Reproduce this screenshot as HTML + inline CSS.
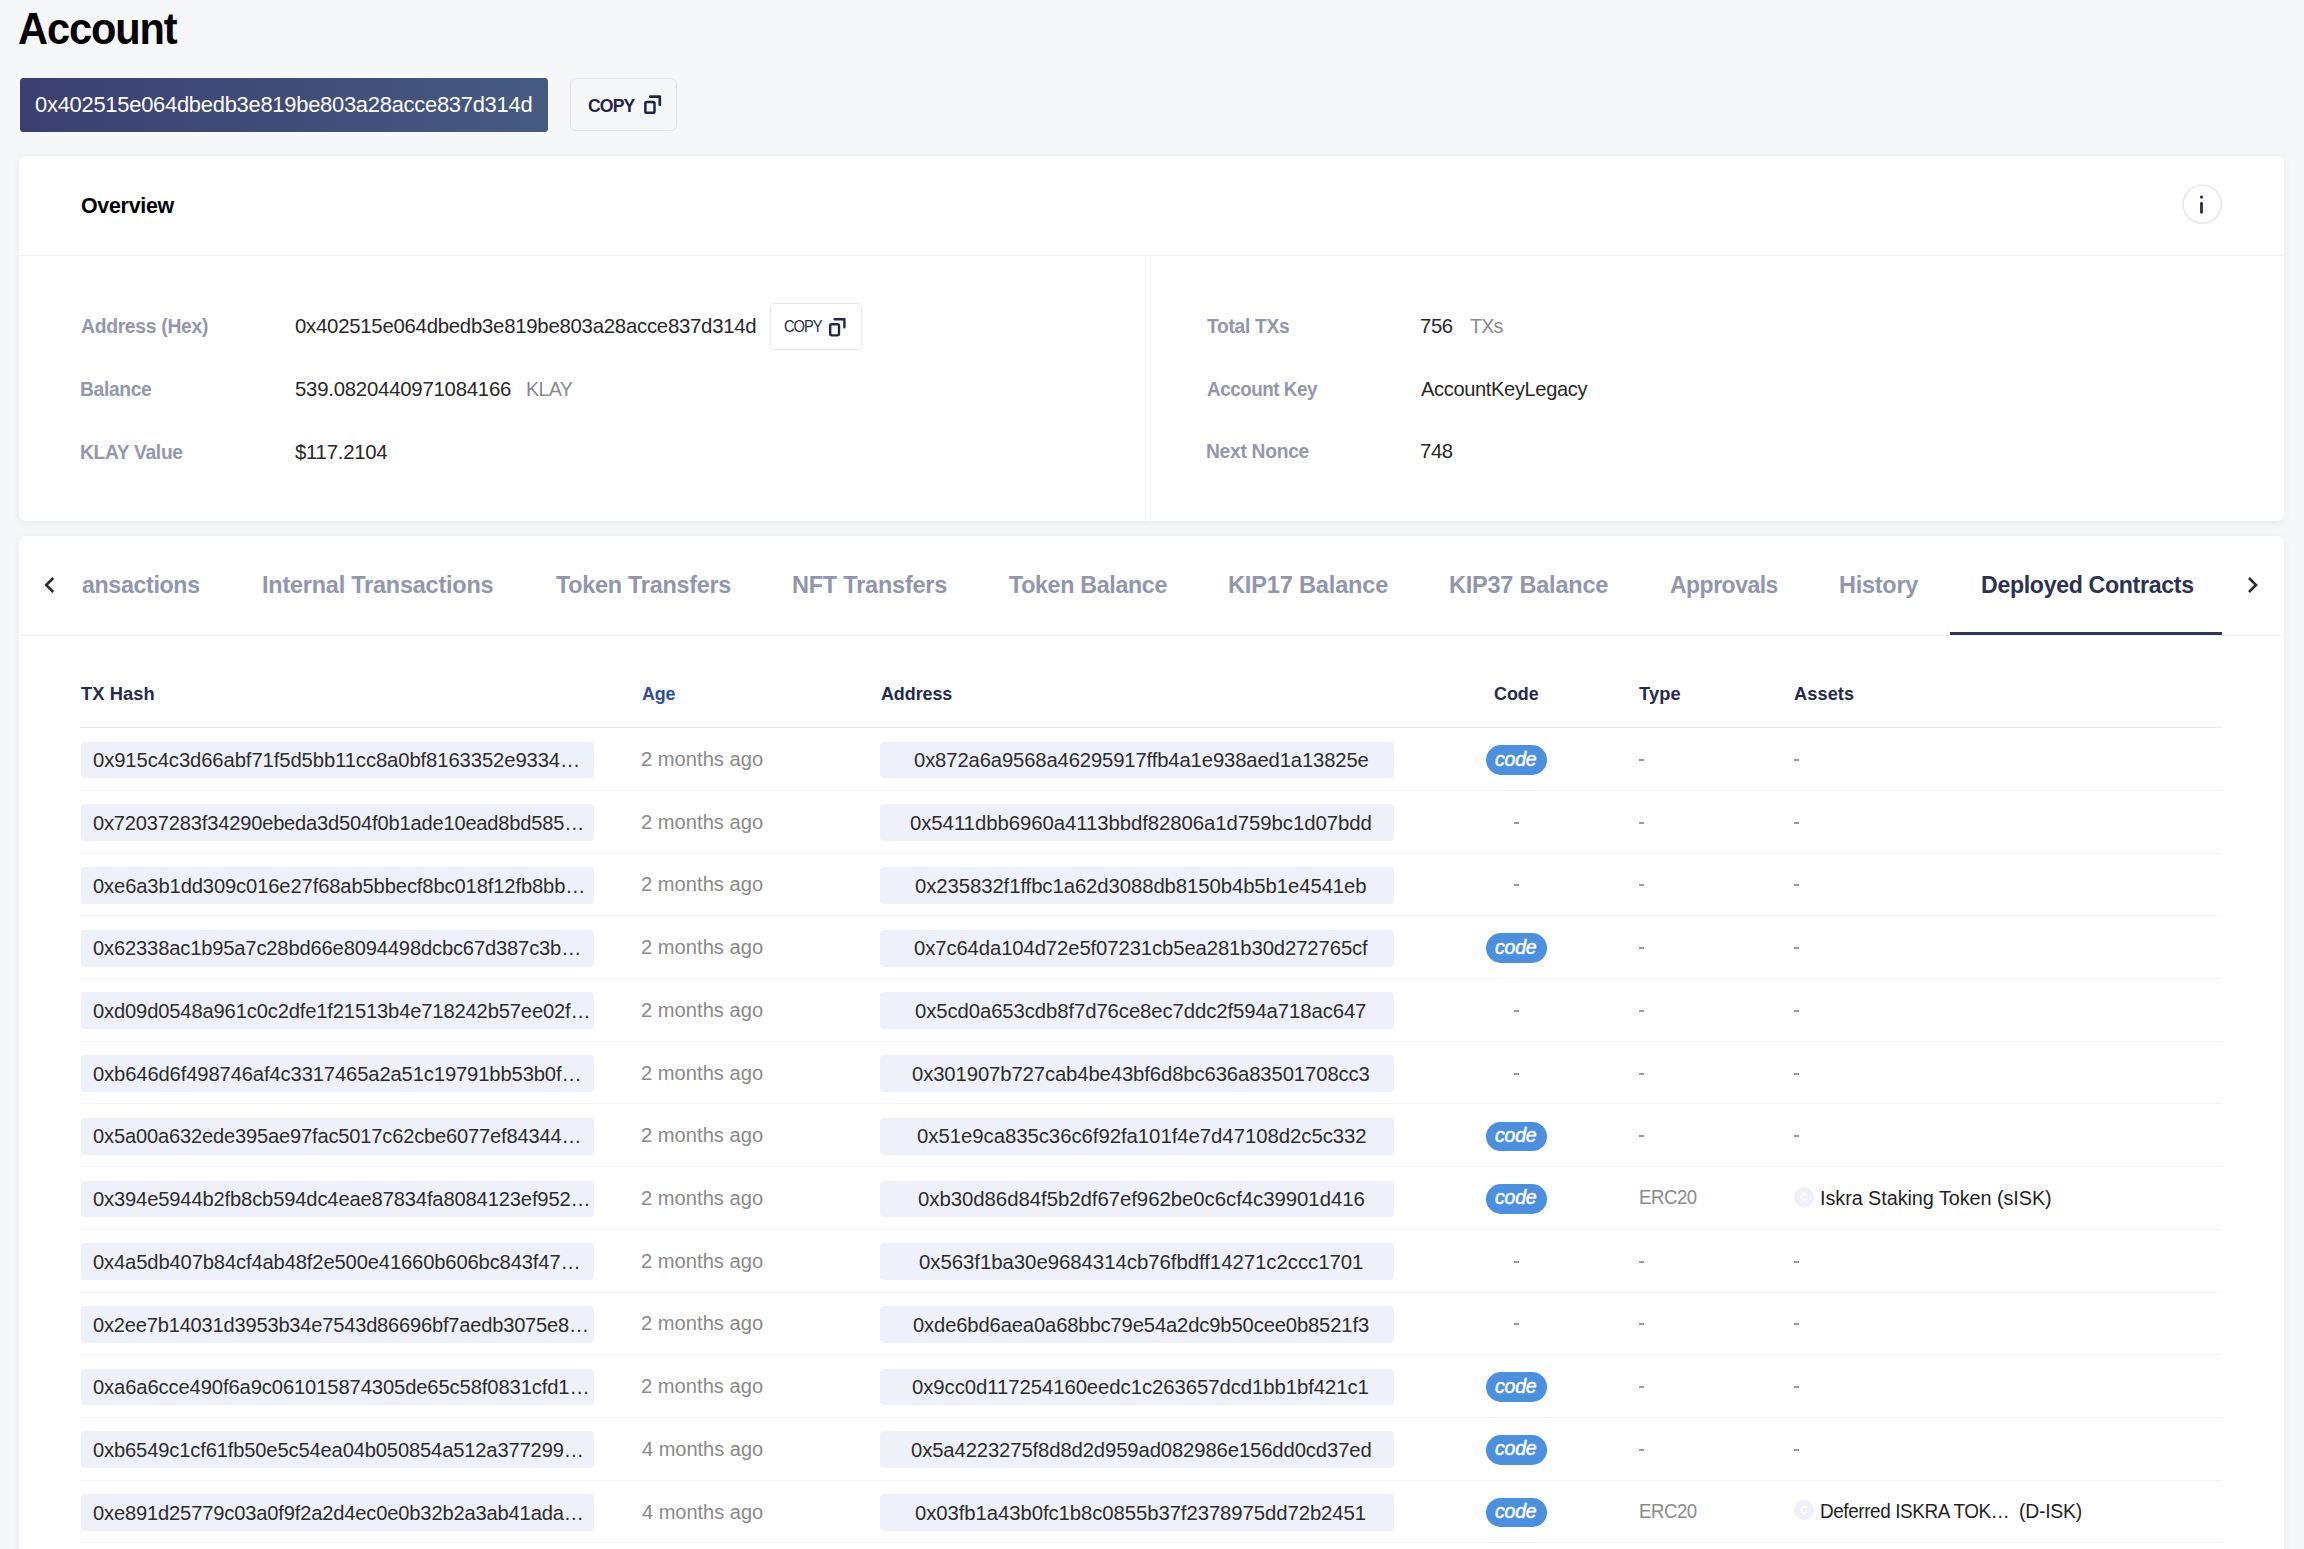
<!DOCTYPE html>
<html><head><meta charset="utf-8"><title>Account</title>
<style>
html,body{margin:0;padding:0}
body{width:2304px;height:1549px;overflow:hidden;background:#f6f7f9;position:relative;font-family:"Liberation Sans", sans-serif}
.t{position:absolute;white-space:pre;line-height:normal}
.clipbox{position:absolute;overflow:hidden}
.dash{position:absolute;width:5px;height:2px;background:#9a9a9a}
</style></head><body>
<div style='position:absolute;left:19.5px;top:78px;width:528.5px;height:53.5px;border-radius:3.5px;background:linear-gradient(90deg,#3b3f70 0%,#465a81 100%)'></div><div style='position:absolute;left:570px;top:78px;width:107px;height:53px;box-sizing:border-box;border:1px solid #e2e4ec;border-radius:6px'></div><svg style='position:absolute;left:636px;top:88px' width='34' height='34' viewBox='0 0 34 34'><path d='M14.3 8.67 H23.8 V16.65' fill='none' stroke='#1f2447' stroke-width='2.7' stroke-linecap='round' stroke-linejoin='round'/><rect x='9.35' y='13.98' width='9.15' height='10.77' fill='none' stroke='#1f2447' stroke-width='2.5' rx='1.6'/></svg><div style='position:absolute;left:19.3px;top:155.8px;width:2264.7px;height:365px;background:#fff;border-radius:7px;box-shadow:0 2px 9px rgba(40,50,90,0.065)'></div><div style='position:absolute;left:19px;top:255px;width:2264px;height:1px;background:#efeff1'></div><div style='position:absolute;left:1150px;top:256px;width:1px;height:265px;background:#efeff1'></div><svg style='position:absolute;left:2176px;top:178px' width='52' height='52' viewBox='0 0 52 52'><circle cx='26.25' cy='26.2' r='19.1' fill='none' stroke='#e6e6ec' stroke-width='1.4'/><circle cx='25.5' cy='19.1' r='1.55' fill='#262a4e'/><path d='M25.5 25.4 V34.3' stroke='#262a4e' stroke-width='2.8' stroke-linecap='round'/></svg><div style='position:absolute;left:770.3px;top:303.4px;width:92px;height:46.4px;box-sizing:border-box;border:1.2px solid #e6e7ee;border-radius:5px'></div><svg style='position:absolute;left:822px;top:310px' width='34' height='34' viewBox='0 0 34 34'><path d='M12.6 9.2 H22.4 V17.2' fill='none' stroke='#22264a' stroke-width='2.4' stroke-linecap='round' stroke-linejoin='round'/><rect x='8.2' y='14.25' width='8.8' height='11.1' fill='none' stroke='#22264a' stroke-width='2.4' rx='1.6'/></svg><div style='position:absolute;left:19.3px;top:536px;width:2264.7px;height:1100px;background:#fff;border-radius:7px;box-shadow:0 2px 9px rgba(40,50,90,0.065)'></div><div style='position:absolute;left:19px;top:635px;width:2264px;height:1px;background:#f0f0f2'></div><div style='position:absolute;left:1950px;top:632px;width:272px;height:3px;background:#2f3358'></div><svg style='position:absolute;left:38px;top:572px' width='22' height='26' viewBox='0 0 22 26'><path d='M15.2 6 L8.2 13 L15.2 20' fill='none' stroke='#2a2a2a' stroke-width='2.6'/></svg><svg style='position:absolute;left:2242px;top:572px' width='22' height='26' viewBox='0 0 22 26'><path d='M7 6 L14 13 L7 20' fill='none' stroke='#2a2a2a' stroke-width='2.6'/></svg><div style='position:absolute;left:80px;top:727px;width:2142px;height:1px;background:#e6e6eb'></div><div style='position:absolute;left:80.6px;top:741.60px;width:513.4px;height:36.8px;background:#eff1fa;border-radius:4px'></div><div style='position:absolute;left:880px;top:741.60px;width:514.3px;height:36.8px;background:#eff1fa;border-radius:4px'></div><div style='position:absolute;left:80px;top:790px;width:2142px;height:1px;background:#f4f4f6'></div><div style='position:absolute;left:1486px;top:745.30px;width:61.4px;height:29.4px;background:#4a8fe0;border-radius:15px'></div><div class=dash style='left:1639px;top:759px'></div><div class=dash style='left:1794px;top:759px'></div><div style='position:absolute;left:80.6px;top:804.31px;width:513.4px;height:36.8px;background:#eff1fa;border-radius:4px'></div><div style='position:absolute;left:880px;top:804.31px;width:514.3px;height:36.8px;background:#eff1fa;border-radius:4px'></div><div style='position:absolute;left:80px;top:853px;width:2142px;height:1px;background:#f4f4f6'></div><div class=dash style='left:1514px;top:822px'></div><div class=dash style='left:1639px;top:822px'></div><div class=dash style='left:1794px;top:822px'></div><div style='position:absolute;left:80.6px;top:867.02px;width:513.4px;height:36.8px;background:#eff1fa;border-radius:4px'></div><div style='position:absolute;left:880px;top:867.02px;width:514.3px;height:36.8px;background:#eff1fa;border-radius:4px'></div><div style='position:absolute;left:80px;top:915px;width:2142px;height:1px;background:#f4f4f6'></div><div class=dash style='left:1514px;top:884px'></div><div class=dash style='left:1639px;top:884px'></div><div class=dash style='left:1794px;top:884px'></div><div style='position:absolute;left:80.6px;top:929.73px;width:513.4px;height:36.8px;background:#eff1fa;border-radius:4px'></div><div style='position:absolute;left:880px;top:929.73px;width:514.3px;height:36.8px;background:#eff1fa;border-radius:4px'></div><div style='position:absolute;left:80px;top:978px;width:2142px;height:1px;background:#f4f4f6'></div><div style='position:absolute;left:1486px;top:933.43px;width:61.4px;height:29.4px;background:#4a8fe0;border-radius:15px'></div><div class=dash style='left:1639px;top:947px'></div><div class=dash style='left:1794px;top:947px'></div><div style='position:absolute;left:80.6px;top:992.44px;width:513.4px;height:36.8px;background:#eff1fa;border-radius:4px'></div><div style='position:absolute;left:880px;top:992.44px;width:514.3px;height:36.8px;background:#eff1fa;border-radius:4px'></div><div style='position:absolute;left:80px;top:1041px;width:2142px;height:1px;background:#f4f4f6'></div><div class=dash style='left:1514px;top:1010px'></div><div class=dash style='left:1639px;top:1010px'></div><div class=dash style='left:1794px;top:1010px'></div><div style='position:absolute;left:80.6px;top:1055.15px;width:513.4px;height:36.8px;background:#eff1fa;border-radius:4px'></div><div style='position:absolute;left:880px;top:1055.15px;width:514.3px;height:36.8px;background:#eff1fa;border-radius:4px'></div><div style='position:absolute;left:80px;top:1103px;width:2142px;height:1px;background:#f4f4f6'></div><div class=dash style='left:1514px;top:1073px'></div><div class=dash style='left:1639px;top:1073px'></div><div class=dash style='left:1794px;top:1073px'></div><div style='position:absolute;left:80.6px;top:1117.86px;width:513.4px;height:36.8px;background:#eff1fa;border-radius:4px'></div><div style='position:absolute;left:880px;top:1117.86px;width:514.3px;height:36.8px;background:#eff1fa;border-radius:4px'></div><div style='position:absolute;left:80px;top:1166px;width:2142px;height:1px;background:#f4f4f6'></div><div style='position:absolute;left:1486px;top:1121.56px;width:61.4px;height:29.4px;background:#4a8fe0;border-radius:15px'></div><div class=dash style='left:1639px;top:1135px'></div><div class=dash style='left:1794px;top:1135px'></div><div style='position:absolute;left:80.6px;top:1180.57px;width:513.4px;height:36.8px;background:#eff1fa;border-radius:4px'></div><div style='position:absolute;left:880px;top:1180.57px;width:514.3px;height:36.8px;background:#eff1fa;border-radius:4px'></div><div style='position:absolute;left:80px;top:1229px;width:2142px;height:1px;background:#f4f4f6'></div><div style='position:absolute;left:1486px;top:1184.27px;width:61.4px;height:29.4px;background:#4a8fe0;border-radius:15px'></div><svg style='position:absolute;left:1794px;top:1186.87px' width='20' height='20' viewBox='0 0 20 20'><circle cx='10' cy='10' r='10' fill='#eef0fb'/><path d='M12.8 8.1 A3.2 3.2 0 1 0 12.8 11.9' fill='none' stroke='#fff' stroke-width='1.6'/><path d='M10.1 5.2 V7.2 M10.1 12.8 V14.8' stroke='#fff' stroke-width='1.6'/></svg><div style='position:absolute;left:80.6px;top:1243.28px;width:513.4px;height:36.8px;background:#eff1fa;border-radius:4px'></div><div style='position:absolute;left:880px;top:1243.28px;width:514.3px;height:36.8px;background:#eff1fa;border-radius:4px'></div><div style='position:absolute;left:80px;top:1292px;width:2142px;height:1px;background:#f4f4f6'></div><div class=dash style='left:1514px;top:1261px'></div><div class=dash style='left:1639px;top:1261px'></div><div class=dash style='left:1794px;top:1261px'></div><div style='position:absolute;left:80.6px;top:1305.99px;width:513.4px;height:36.8px;background:#eff1fa;border-radius:4px'></div><div style='position:absolute;left:880px;top:1305.99px;width:514.3px;height:36.8px;background:#eff1fa;border-radius:4px'></div><div style='position:absolute;left:80px;top:1354px;width:2142px;height:1px;background:#f4f4f6'></div><div class=dash style='left:1514px;top:1323px'></div><div class=dash style='left:1639px;top:1323px'></div><div class=dash style='left:1794px;top:1323px'></div><div style='position:absolute;left:80.6px;top:1368.70px;width:513.4px;height:36.8px;background:#eff1fa;border-radius:4px'></div><div style='position:absolute;left:880px;top:1368.70px;width:514.3px;height:36.8px;background:#eff1fa;border-radius:4px'></div><div style='position:absolute;left:80px;top:1417px;width:2142px;height:1px;background:#f4f4f6'></div><div style='position:absolute;left:1486px;top:1372.40px;width:61.4px;height:29.4px;background:#4a8fe0;border-radius:15px'></div><div class=dash style='left:1639px;top:1386px'></div><div class=dash style='left:1794px;top:1386px'></div><div style='position:absolute;left:80.6px;top:1431.41px;width:513.4px;height:36.8px;background:#eff1fa;border-radius:4px'></div><div style='position:absolute;left:880px;top:1431.41px;width:514.3px;height:36.8px;background:#eff1fa;border-radius:4px'></div><div style='position:absolute;left:80px;top:1480px;width:2142px;height:1px;background:#f4f4f6'></div><div style='position:absolute;left:1486px;top:1435.11px;width:61.4px;height:29.4px;background:#4a8fe0;border-radius:15px'></div><div class=dash style='left:1639px;top:1449px'></div><div class=dash style='left:1794px;top:1449px'></div><div style='position:absolute;left:80.6px;top:1494.12px;width:513.4px;height:36.8px;background:#eff1fa;border-radius:4px'></div><div style='position:absolute;left:880px;top:1494.12px;width:514.3px;height:36.8px;background:#eff1fa;border-radius:4px'></div><div style='position:absolute;left:80px;top:1542px;width:2142px;height:1px;background:#f4f4f6'></div><div style='position:absolute;left:1486px;top:1497.82px;width:61.4px;height:29.4px;background:#4a8fe0;border-radius:15px'></div><svg style='position:absolute;left:1794px;top:1500.42px' width='20' height='20' viewBox='0 0 20 20'><circle cx='10' cy='10' r='10' fill='#eef0fb'/><path d='M12.8 8.1 A3.2 3.2 0 1 0 12.8 11.9' fill='none' stroke='#fff' stroke-width='1.6'/><path d='M10.1 5.2 V7.2 M10.1 12.8 V14.8' stroke='#fff' stroke-width='1.6'/></svg>
<span class=t style='left:18.06px;top:4.30px;font-size:44px;color:#000;letter-spacing:-1.154px;transform:scaleX(0.9441);transform-origin:0 0;font-weight:700'>Account</span><span class=t style='left:35.00px;top:91.50px;font-size:22.6px;color:#fff;letter-spacing:-0.265px;transform:scaleX(0.9698);transform-origin:0 0'>0x402515e064dbedb3e819be803a28acce837d314d</span><span class=t style='left:588.40px;top:95.30px;font-size:19px;color:#1f2447;letter-spacing:-0.945px;transform:scaleX(0.9272);transform-origin:0 0;font-weight:700'>COPY</span><span class=t style='left:80.70px;top:193.20px;font-size:22px;color:#000;letter-spacing:-0.278px;transform:scaleX(0.9713);transform-origin:0 0;font-weight:700'>Overview</span><span class=t style='left:80.50px;top:315.20px;font-size:20px;color:#9397ae;letter-spacing:-0.285px;transform:scaleX(0.9634);transform-origin:0 0;font-weight:700'>Address (Hex)</span><span class=t style='left:79.54px;top:378.00px;font-size:20px;color:#9397ae;letter-spacing:-0.339px;transform:scaleX(0.9612);transform-origin:0 0;font-weight:700'>Balance</span><span class=t style='left:79.54px;top:440.60px;font-size:20px;color:#9397ae;letter-spacing:-0.323px;transform:scaleX(0.9616);transform-origin:0 0;font-weight:700'>KLAY Value</span><span class=t style='left:295.00px;top:314.00px;font-size:21px;color:#282828;letter-spacing:-0.255px;transform:scaleX(0.9688);transform-origin:0 0'>0x402515e064dbedb3e819be803a28acce837d314d</span><span class=t style='left:784.20px;top:317.00px;font-size:16.3px;color:#262a4c;letter-spacing:-1.105px;transform:scaleX(0.9030);transform-origin:0 0'>COPY</span><span class=t style='left:295.00px;top:376.50px;font-size:21px;color:#282828;letter-spacing:-0.247px;transform:scaleX(0.9700);transform-origin:0 0'>539.0820440971084166</span><span class=t style='left:526.46px;top:376.50px;font-size:21px;color:#8a8a8a;letter-spacing:-0.713px;transform:scaleX(0.9409);transform-origin:0 0'>KLAY</span><span class=t style='left:295.00px;top:439.75px;font-size:21px;color:#282828;letter-spacing:-0.260px;transform:scaleX(0.9692);transform-origin:0 0'>$117.2104</span><span class=t style='left:1206.80px;top:314.75px;font-size:20px;color:#9397ae;letter-spacing:-0.307px;transform:scaleX(0.9599);transform-origin:0 0;font-weight:700'>Total TXs</span><span class=t style='left:1206.80px;top:377.70px;font-size:20px;color:#9397ae;letter-spacing:-0.506px;transform:scaleX(0.9419);transform-origin:0 0;font-weight:700'>Account Key</span><span class=t style='left:1205.84px;top:439.75px;font-size:20px;color:#9397ae;letter-spacing:-0.309px;transform:scaleX(0.9631);transform-origin:0 0;font-weight:700'>Next Nonce</span><span class=t style='left:1420.03px;top:313.75px;font-size:21px;color:#282828;letter-spacing:-0.385px;transform:scaleX(0.9666);transform-origin:0 0'>756</span><span class=t style='left:1470.00px;top:313.75px;font-size:21px;color:#8a8a8a;letter-spacing:-0.818px;transform:scaleX(0.9375);transform-origin:0 0'>TXs</span><span class=t style='left:1421.00px;top:376.70px;font-size:21px;color:#282828;letter-spacing:-0.371px;transform:scaleX(0.9558);transform-origin:0 0'>AccountKeyLegacy</span><span class=t style='left:1420.03px;top:438.75px;font-size:21px;color:#282828;letter-spacing:-0.385px;transform:scaleX(0.9666);transform-origin:0 0'>748</span><span class=t style='left:82.00px;top:571.00px;font-size:24px;color:#9196ae;letter-spacing:-0.338px;transform:scaleX(0.9648);transform-origin:0 0;font-weight:700'>ansactions</span><span class=t style='left:262.02px;top:571.00px;font-size:24px;color:#9196ae;letter-spacing:-0.202px;transform:scaleX(0.9754);transform-origin:0 0;font-weight:700'>Internal Transactions</span><span class=t style='left:556.00px;top:571.00px;font-size:24px;color:#9196ae;letter-spacing:-0.243px;transform:scaleX(0.9729);transform-origin:0 0;font-weight:700'>Token Transfers</span><span class=t style='left:792.02px;top:571.00px;font-size:24px;color:#9196ae;letter-spacing:-0.206px;transform:scaleX(0.9774);transform-origin:0 0;font-weight:700'>NFT Transfers</span><span class=t style='left:1009.00px;top:571.00px;font-size:24px;color:#9196ae;letter-spacing:-0.319px;transform:scaleX(0.9668);transform-origin:0 0;font-weight:700'>Token Balance</span><span class=t style='left:1228.02px;top:571.00px;font-size:24px;color:#9196ae;letter-spacing:-0.172px;transform:scaleX(0.9814);transform-origin:0 0;font-weight:700'>KIP17 Balance</span><span class=t style='left:1449.02px;top:571.00px;font-size:24px;color:#9196ae;letter-spacing:-0.207px;transform:scaleX(0.9778);transform-origin:0 0;font-weight:700'>KIP37 Balance</span><span class=t style='left:1670.00px;top:571.00px;font-size:24px;color:#9196ae;letter-spacing:-0.473px;transform:scaleX(0.9538);transform-origin:0 0;font-weight:700'>Approvals</span><span class=t style='left:1839.02px;top:571.00px;font-size:24px;color:#9196ae;letter-spacing:-0.228px;transform:scaleX(0.9757);transform-origin:0 0;font-weight:700'>History</span><span class=t style='left:1980.64px;top:571.00px;font-size:24px;color:#2d3152;letter-spacing:-0.334px;transform:scaleX(0.9636);transform-origin:0 0;font-weight:700'>Deployed Contracts</span><span class=t style='left:80.80px;top:684.00px;font-size:18px;color:#242a4f;letter-spacing:0.110px;transform:scaleX(1.0142);transform-origin:0 0;font-weight:700'>TX Hash</span><span class=t style='left:642.00px;top:684.00px;font-size:18px;color:#2b4ba8;letter-spacing:-0.100px;transform:scaleX(0.9913);transform-origin:0 0;font-weight:700'>Age</span><span class=t style='left:880.70px;top:684.00px;font-size:18px;color:#242a4f;letter-spacing:-0.048px;transform:scaleX(0.9940);transform-origin:0 0;font-weight:700'>Address</span><span class=t style='left:1494.10px;top:684.00px;font-size:18px;color:#242a4f;letter-spacing:-0.052px;transform:scaleX(0.9948);transform-origin:0 0;font-weight:700'>Code</span><span class=t style='left:1639.40px;top:684.00px;font-size:18px;color:#242a4f;letter-spacing:0.123px;transform:scaleX(1.0138);transform-origin:0 0;font-weight:700'>Type</span><span class=t style='left:1793.60px;top:684.00px;font-size:18px;color:#242a4f;letter-spacing:0.085px;transform:scaleX(1.0109);transform-origin:0 0;font-weight:700'>Assets</span><span class=t style='left:92.80px;top:748.20px;font-size:20.5px;color:#2c2c2c;letter-spacing:-0.096px;transform:scaleX(0.9873);transform-origin:0 0'>0x915c4c3d66abf71f5d5bb11cc8a0bf8163352e9334…</span><span class=t style='left:641.00px;top:748.00px;font-size:20px;color:#8a8a8a;letter-spacing:0.034px;transform:scaleX(1.0047);transform-origin:0 0'>2 months ago</span><span class=t style='left:913.70px;top:748.20px;font-size:20.5px;color:#2c2c2c;letter-spacing:-0.110px;transform:scaleX(0.9857);transform-origin:0 0'>0x872a6a9568a46295917ffb4a1e938aed1a13825e</span><span class=t style='left:92.80px;top:810.91px;font-size:20.5px;color:#2c2c2c;letter-spacing:-0.169px;transform:scaleX(0.9785);transform-origin:0 0'>0x72037283f34290ebeda3d504f0b1ade10ead8bd585…</span><span class=t style='left:641.00px;top:810.71px;font-size:20px;color:#8a8a8a;letter-spacing:0.034px;transform:scaleX(1.0047);transform-origin:0 0'>2 months ago</span><span class=t style='left:910.20px;top:810.91px;font-size:20.5px;color:#2c2c2c;letter-spacing:-0.059px;transform:scaleX(0.9923);transform-origin:0 0'>0x5411dbb6960a4113bbdf82806a1d759bc1d07bdd</span><span class=t style='left:92.80px;top:873.62px;font-size:20.5px;color:#2c2c2c;letter-spacing:-0.123px;transform:scaleX(0.9838);transform-origin:0 0'>0xe6a3b1dd309c016e27f68ab5bbecf8bc018f12fb8bb…</span><span class=t style='left:641.00px;top:873.42px;font-size:20px;color:#8a8a8a;letter-spacing:0.034px;transform:scaleX(1.0047);transform-origin:0 0'>2 months ago</span><span class=t style='left:915.30px;top:873.62px;font-size:20.5px;color:#2c2c2c;letter-spacing:-0.073px;transform:scaleX(0.9902);transform-origin:0 0'>0x235832f1ffbc1a62d3088db8150b4b5b1e4541eb</span><span class=t style='left:92.80px;top:936.33px;font-size:20.5px;color:#2c2c2c;letter-spacing:-0.147px;transform:scaleX(0.9814);transform-origin:0 0'>0x62338ac1b95a7c28bd66e8094498dcbc67d387c3b…</span><span class=t style='left:641.00px;top:936.13px;font-size:20px;color:#8a8a8a;letter-spacing:0.034px;transform:scaleX(1.0047);transform-origin:0 0'>2 months ago</span><span class=t style='left:913.70px;top:936.33px;font-size:20.5px;color:#2c2c2c;letter-spacing:-0.090px;transform:scaleX(0.9882);transform-origin:0 0'>0x7c64da104d72e5f07231cb5ea281b30d272765cf</span><span class=t style='left:92.80px;top:999.04px;font-size:20.5px;color:#2c2c2c;letter-spacing:-0.138px;transform:scaleX(0.9820);transform-origin:0 0'>0xd09d0548a961c0c2dfe1f21513b4e718242b57ee02f…</span><span class=t style='left:641.00px;top:998.84px;font-size:20px;color:#8a8a8a;letter-spacing:0.034px;transform:scaleX(1.0047);transform-origin:0 0'>2 months ago</span><span class=t style='left:915.30px;top:999.04px;font-size:20.5px;color:#2c2c2c;letter-spacing:-0.079px;transform:scaleX(0.9896);transform-origin:0 0'>0x5cd0a653cdb8f7d76ce8ec7ddc2f594a718ac647</span><span class=t style='left:92.80px;top:1061.75px;font-size:20.5px;color:#2c2c2c;letter-spacing:-0.119px;transform:scaleX(0.9845);transform-origin:0 0'>0xb646d6f498746af4c3317465a2a51c19791bb53b0f…</span><span class=t style='left:641.00px;top:1061.55px;font-size:20px;color:#8a8a8a;letter-spacing:0.034px;transform:scaleX(1.0047);transform-origin:0 0'>2 months ago</span><span class=t style='left:911.80px;top:1061.75px;font-size:20.5px;color:#2c2c2c;letter-spacing:-0.094px;transform:scaleX(0.9878);transform-origin:0 0'>0x301907b727cab4be43bf6d8bc636a83501708cc3</span><span class=t style='left:92.80px;top:1124.46px;font-size:20.5px;color:#2c2c2c;letter-spacing:-0.162px;transform:scaleX(0.9792);transform-origin:0 0'>0x5a00a632ede395ae97fac5017c62cbe6077ef84344…</span><span class=t style='left:641.00px;top:1124.26px;font-size:20px;color:#8a8a8a;letter-spacing:0.034px;transform:scaleX(1.0047);transform-origin:0 0'>2 months ago</span><span class=t style='left:916.50px;top:1124.46px;font-size:20.5px;color:#2c2c2c;letter-spacing:-0.050px;transform:scaleX(0.9932);transform-origin:0 0'>0x51e9ca835c36c6f92fa101f4e7d47108d2c5c332</span><span class=t style='left:92.80px;top:1187.17px;font-size:20.5px;color:#2c2c2c;letter-spacing:-0.138px;transform:scaleX(0.9820);transform-origin:0 0'>0x394e5944b2fb8cb594dc4eae87834fa8084123ef952…</span><span class=t style='left:641.00px;top:1186.97px;font-size:20px;color:#8a8a8a;letter-spacing:0.034px;transform:scaleX(1.0047);transform-origin:0 0'>2 months ago</span><span class=t style='left:918.00px;top:1187.17px;font-size:20.5px;color:#2c2c2c;letter-spacing:-0.045px;transform:scaleX(0.9939);transform-origin:0 0'>0xb30d86d84f5b2df67ef962be0c6cf4c39901d416</span><span class=t style='left:1638.75px;top:1185.97px;font-size:19.5px;color:#8a8a8a;letter-spacing:-0.494px;transform:scaleX(0.9544);transform-origin:0 0'>ERC20</span><span class=t style='left:1819.81px;top:1186.67px;font-size:20px;color:#1f1f1f;letter-spacing:-0.058px;transform:scaleX(0.9908);transform-origin:0 0'>Iskra Staking Token (sISK)</span><span class=t style='left:92.80px;top:1249.88px;font-size:20.5px;color:#2c2c2c;letter-spacing:-0.128px;transform:scaleX(0.9833);transform-origin:0 0'>0x4a5db407b84cf4ab48f2e500e41660b606bc843f47…</span><span class=t style='left:641.00px;top:1249.68px;font-size:20px;color:#8a8a8a;letter-spacing:0.034px;transform:scaleX(1.0047);transform-origin:0 0'>2 months ago</span><span class=t style='left:918.80px;top:1249.88px;font-size:20.5px;color:#2c2c2c;letter-spacing:-0.043px;transform:scaleX(0.9942);transform-origin:0 0'>0x563f1ba30e9684314cb76fbdff14271c2ccc1701</span><span class=t style='left:92.80px;top:1312.59px;font-size:20.5px;color:#2c2c2c;letter-spacing:-0.178px;transform:scaleX(0.9775);transform-origin:0 0'>0x2ee7b14031d3953b34e7543d86696bf7aedb3075e8…</span><span class=t style='left:641.00px;top:1312.39px;font-size:20px;color:#8a8a8a;letter-spacing:0.034px;transform:scaleX(1.0047);transform-origin:0 0'>2 months ago</span><span class=t style='left:913.00px;top:1312.59px;font-size:20.5px;color:#2c2c2c;letter-spacing:-0.123px;transform:scaleX(0.9841);transform-origin:0 0'>0xde6bd6aea0a68bbc79e54a2dc9b50cee0b8521f3</span><span class=t style='left:92.80px;top:1375.30px;font-size:20.5px;color:#2c2c2c;letter-spacing:-0.116px;transform:scaleX(0.9848);transform-origin:0 0'>0xa6a6cce490f6a9c061015874305de65c58f0831cfd1…</span><span class=t style='left:641.00px;top:1375.10px;font-size:20px;color:#8a8a8a;letter-spacing:0.034px;transform:scaleX(1.0047);transform-origin:0 0'>2 months ago</span><span class=t style='left:912.20px;top:1375.30px;font-size:20.5px;color:#2c2c2c;letter-spacing:-0.066px;transform:scaleX(0.9914);transform-origin:0 0'>0x9cc0d117254160eedc1c263657dcd1bb1bf421c1</span><span class=t style='left:92.80px;top:1438.01px;font-size:20.5px;color:#2c2c2c;letter-spacing:-0.141px;transform:scaleX(0.9819);transform-origin:0 0'>0xb6549c1cf61fb50e5c54ea04b050854a512a377299…</span><span class=t style='left:642.00px;top:1437.81px;font-size:20px;color:#8a8a8a;letter-spacing:-0.002px;transform:scaleX(0.9997);transform-origin:0 0'>4 months ago</span><span class=t style='left:910.70px;top:1438.01px;font-size:20.5px;color:#2c2c2c;letter-spacing:-0.100px;transform:scaleX(0.9871);transform-origin:0 0'>0x5a4223275f8d8d2d959ad082986e156dd0cd37ed</span><span class=t style='left:92.80px;top:1500.72px;font-size:20.5px;color:#2c2c2c;letter-spacing:-0.152px;transform:scaleX(0.9805);transform-origin:0 0'>0xe891d25779c03a0f9f2a2d4ec0e0b32b2a3ab41ada…</span><span class=t style='left:642.00px;top:1500.52px;font-size:20px;color:#8a8a8a;letter-spacing:-0.002px;transform:scaleX(0.9997);transform-origin:0 0'>4 months ago</span><span class=t style='left:915.10px;top:1500.72px;font-size:20.5px;color:#2c2c2c;letter-spacing:-0.071px;transform:scaleX(0.9906);transform-origin:0 0'>0x03fb1a43b0fc1b8c0855b37f2378975dd72b2451</span><span class=t style='left:1638.75px;top:1499.52px;font-size:19.5px;color:#8a8a8a;letter-spacing:-0.494px;transform:scaleX(0.9544);transform-origin:0 0'>ERC20</span><span class=t style='left:1819.85px;top:1500.22px;font-size:20px;color:#1f1f1f;letter-spacing:-0.434px;transform:scaleX(0.9463);transform-origin:0 0'>Deferred ISKRA TOK…</span><span class=t style='left:2019.03px;top:1500.22px;font-size:20px;color:#1f1f1f;letter-spacing:-0.241px;transform:scaleX(0.9677);transform-origin:0 0'>(D-ISK)</span>
<span class=t style='left:1495px;top:747.50px;font-size:19.5px;font-style:italic;color:#fff;-webkit-text-stroke:0.5px #fff;letter-spacing:-0.2px'>code</span><span class=t style='left:1495px;top:935.63px;font-size:19.5px;font-style:italic;color:#fff;-webkit-text-stroke:0.5px #fff;letter-spacing:-0.2px'>code</span><span class=t style='left:1495px;top:1123.76px;font-size:19.5px;font-style:italic;color:#fff;-webkit-text-stroke:0.5px #fff;letter-spacing:-0.2px'>code</span><span class=t style='left:1495px;top:1186.47px;font-size:19.5px;font-style:italic;color:#fff;-webkit-text-stroke:0.5px #fff;letter-spacing:-0.2px'>code</span><span class=t style='left:1495px;top:1374.60px;font-size:19.5px;font-style:italic;color:#fff;-webkit-text-stroke:0.5px #fff;letter-spacing:-0.2px'>code</span><span class=t style='left:1495px;top:1437.31px;font-size:19.5px;font-style:italic;color:#fff;-webkit-text-stroke:0.5px #fff;letter-spacing:-0.2px'>code</span><span class=t style='left:1495px;top:1500.02px;font-size:19.5px;font-style:italic;color:#fff;-webkit-text-stroke:0.5px #fff;letter-spacing:-0.2px'>code</span>
</body></html>
